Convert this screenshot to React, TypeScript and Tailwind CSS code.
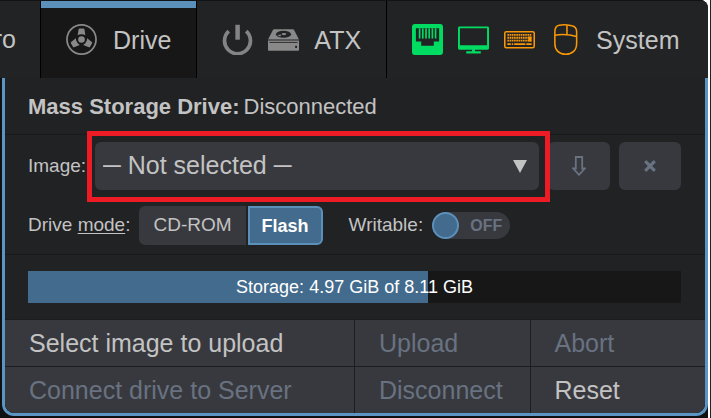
import { useState, type ReactNode } from 'react';
import clsx from 'clsx';

const STORAGE_USED = 4.97;
const STORAGE_TOTAL = 8.11;

function DriveIcon() {
  return (
    <svg viewBox="0 0 32 32" className="size-[31px] shrink-0 text-[#898989]" fill="currentColor" aria-hidden="true">
      <circle cx="16" cy="16" r="15" fill="none" stroke="currentColor" strokeWidth="1.8" />
      <circle cx="16" cy="16" r="3.4" />
      {[0, 120, 240].map(a => (
        <path key={a} transform={`rotate(${a} 16 16)`} d="M14 4.6h4c.6 0 .9.3 1 .8l1 6.2c-1.200-.7-2.400-1-4-1s-2.800.3-4 1l1-6.200c.1-.5.4-.8 1-.8z" />
      ))}
    </svg>
  );
}

function PowerIcon() {
  return (
    <svg viewBox="0 0 32 32" className="size-[31px] shrink-0 text-[#848484]" fill="currentColor" aria-hidden="true">
      <path d="M7 7.4A13.400 13.400 0 1 0 25 7.400" fill="none" stroke="currentColor" strokeWidth="3.8" />
      <rect x="13.8" y="0.8" width="4.6" height="15.4" />
    </svg>
  );
}

function DiskIcon() {
  return (
    <svg viewBox="0 0 32 32" className="size-[31px] shrink-0 text-[#898989]" fill="currentColor" aria-hidden="true">
      <path d="M6.4 5.500h19.200c.6 0 1 .3 1.300.8L32 16H0l5.100-9.700c.3-.5.7-.8 1.300-.8z" />
      <path d="M0 17h32v9.500c0 .7-.5 1.200-1.200 1.200H1.200C.5 27.700 0 27.200 0 26.500z" />
      <rect x="1.5" y="18.5" width="29" height=".9" fill="#222325" />
      <ellipse cx="16" cy="10.6" rx="7.8" ry="3.7" fill="#222325" />
      <ellipse cx="16.5" cy="10.4" rx="2.4" ry="1.1" />
      <path d="M9.500 11.400l4.500-.5-1.500 1.900z" />
      <rect x="28" y="22.5" width="2" height="2.2" fill="#222325" />
    </svg>
  );
}

function NetworkIcon() {
  return (
    <svg viewBox="0 0 32 32" className="size-[31px] shrink-0 text-[#00dc62]" fill="currentColor" aria-hidden="true">
      <path fillRule="evenodd" d="M3 0h26a3 3 0 0 1 3 3v26a3 3 0 0 1-3 3H3a3 3 0 0 1-3-3V3a3 3 0 0 1 3-3zM4 4.500V18h5.500v4.500h13V18H28V4.500z" />
      {[7, 10.3, 13.6, 16.9, 20.2, 23.5].map(x => (
        <rect key={x} x={x} y="4.5" width="1.7" height="10.5" />
      ))}
    </svg>
  );
}

function MonitorIcon() {
  return (
    <svg viewBox="0 0 32 32" className="size-[31px] shrink-0 text-[#00dc62]" fill="currentColor" aria-hidden="true">
      <path fillRule="evenodd" d="M1.500 2.500h29c.8 0 1.500.6 1.500 1.500v21c0 .8-.7 1.500-1.500 1.500h-29C.7 26.500 0 25.800 0 25V4c0-.9.7-1.500 1.500-1.500zM2 4.500V22h28V4.500z" />
      <path d="M14.500 26h3v2h6v2.500h-15V28h6z" />
    </svg>
  );
}

function KeyboardIcon() {
  return (
    <svg viewBox="0 0 32 32" className="size-[31px] shrink-0 text-[#f89707]" fill="currentColor" aria-hidden="true">
      <rect x=".8" y="8" width="30.4" height="16.5" rx="1.5" fill="none" stroke="currentColor" strokeWidth="1.6" />
      <path d="M3.500 11.200h25M3.500 14.200h25M3.500 17.200h25" fill="none" stroke="currentColor" strokeWidth="1.9" strokeDasharray="1.7 .6" />
      <path d="M3.500 20.800h3.500M8 20.800h1.500M10.500 20.800h11.500M23 20.800h5.500" fill="none" stroke="currentColor" strokeWidth="2" />
      <path d="M25 13h3.500v5H25z" />
    </svg>
  );
}

function MouseIcon() {
  return (
    <svg viewBox="0 0 32 32" className="size-[31px] shrink-0 text-[#f89707]" fill="none" stroke="currentColor" strokeWidth="1.6" aria-hidden="true">
      <path d="M9.500 1.200c4-.7 9-.3 13 .6 3.500.7 5 2.700 5 6.200v12c0 7-4.500 11.200-11.300 11.200C9.300 31.200 5 27 5 20V8c0-4 1-6.200 4.500-6.800z" />
      <path d="M5 11.500c8-1.300 15-.8 22.500 1.300M17.500 1.200v9.800" />
    </svg>
  );
}

function NavItem({ active, className, children }: { active?: boolean; className?: string; children: ReactNode }) {
  return (
    <button
      type="button"
      className={clsx(
        'flex shrink-0 items-center px-6 text-[25px] leading-8',
        active && 'border-x border-x-black bg-[#171717] shadow-[inset_0_7px_0_#5b90bb]',
        className
      )}
    >
      {children}
    </button>
  );
}

function ActionCell({ disabled, children }: { disabled?: boolean; children: ReactNode }) {
  return (
    <button
      type="button"
      disabled={disabled}
      className="h-[46px] truncate bg-[#38393e] pt-0.5 pl-6 text-left text-[25px] text-[#c3c3c3] disabled:text-[#687281]"
    >
      {children}
    </button>
  );
}

export default function App() {
  const [mode, setMode] = useState<'cdrom' | 'flash'>('flash');
  const [writable, setWritable] = useState(false);

  const modes = [
    { id: 'cdrom', label: 'CD-ROM' },
    { id: 'flash', label: 'Flash' },
  ] as const;

  return (
    <div className="border-r border-[#222325] bg-white pr-0.5 font-['Liberation_Sans',Arial,sans-serif] text-[#c3c3c3]">
      <div className="overflow-hidden rounded-tr-lg bg-[#101113] pb-0.5">
        <nav className="flex h-[78px] border-t border-[#121315] bg-[#222325]">
          <button type="button" className="flex w-10 shrink-0 items-center justify-end overflow-hidden pr-6 text-[25px]">ro</button>
          <NavItem active className="gap-4 px-[25px]"><DriveIcon /> Drive</NavItem>
          <NavItem className="gap-[15px] border-r border-black px-[25px]"><PowerIcon /><DiskIcon /> ATX</NavItem>
          <NavItem className="gap-[15px] px-[25px]"><NetworkIcon /><MonitorIcon /><KeyboardIcon /><MouseIcon /> System</NavItem>
        </nav>

        <main className="ml-0.5 overflow-hidden rounded-b-xl border-x-[3px] border-b-[3px] border-[#5b95c4] bg-[#212224]">
          <h1 className="flex h-[57px] items-center gap-1 border-b border-[#18191b] px-[23px] text-[22px]">
            <strong>Mass Storage Drive:</strong> Disconnected
          </h1>

          <section className="border-b border-[#18191b] pt-[7px] pr-6 pb-[9px] pl-[23px]">
            <div className="flex items-center gap-[9px]">
              <label htmlFor="image" className="text-[19px]">Image:</label>
              <div className="relative flex-1">
                <select id="image" className="block h-12 w-full appearance-none rounded-md bg-[#38393e] pl-2 text-[25px] text-[#c3c3c3]">
                  <option>─ Not selected ─</option>
                </select>
                <svg viewBox="0 0 14 13" className="pointer-events-none absolute top-[18px] right-3 h-[13px] w-3.5 fill-[#c3c3c3]" aria-hidden="true">
                  <path d="M0 0h14L7 13z" />
                </svg>
                <div className="pointer-events-none absolute -top-[11px] -right-[11px] -bottom-3 -left-2 z-10 border-[5px] border-[#ed1c24]" />
              </div>
              <button type="button" disabled aria-label="Download" className="flex h-12 w-[62px] items-center justify-center rounded-md bg-[#38393e] text-[#687281]">
                <svg viewBox="0 0 14 20" className="h-5 w-3.5" fill="none" stroke="currentColor" strokeWidth="1.8" aria-hidden="true">
                  <path d="M3.800 1h6.400v11.500h2.600L7 18.800 1.200 12.500h2.600z" />
                </svg>
              </button>
              <button type="button" disabled aria-label="Remove" className="flex h-12 w-[62px] items-center justify-center rounded-md bg-[#38393e] text-[#687281]">
                <svg viewBox="0 0 12 12" className="size-3" fill="none" stroke="currentColor" strokeWidth="3.2" aria-hidden="true">
                  <path d="M1.200 1.200l9.600 9.600M10.800 1.200l-9.600 9.600" />
                </svg>
              </button>
            </div>

            <div className="mt-4 flex items-center text-[19px]">
              <span id="mode-label" className="mr-[9px]">Drive <u className="underline-offset-2">mode</u>:</span>
              <div role="radiogroup" aria-labelledby="mode-label" className="flex items-center gap-0.5">
                {modes.map(m => (
                  <label
                    key={m.id}
                    className={clsx(
                      'relative flex h-[39px] items-center border-2 px-3 first:rounded-l-md last:rounded-r-md',
                      mode === m.id ? 'border-[#5b90bb] bg-[#436b8d] text-lg font-bold text-white' : 'border-[#38393e] bg-[#38393e]'
                    )}
                  >
                    <input
                      type="radio"
                      name="mode"
                      className="absolute inset-0 appearance-none"
                      checked={mode === m.id}
                      onChange={() => setMode(m.id)}
                    />
                    {m.label}
                  </label>
                ))}
              </div>
              <label htmlFor="writable" className="ml-[26px]">Writable:</label>
              <div className="relative ml-[9px]">
                <input
                  id="writable"
                  type="checkbox"
                  checked={writable}
                  onChange={e => setWritable(e.target.checked)}
                  className="flex h-[27px] w-[78px] appearance-none rounded-full bg-[#38393e] before:size-[27px] before:rounded-full before:border-2 before:border-[#5b90bb] before:bg-[#436b8d] checked:justify-end"
                />
                <span className={clsx('pointer-events-none absolute inset-y-0 flex items-center text-base font-bold text-[#687281]', writable ? 'left-2' : 'right-2')}>
                  {writable ? 'ON' : 'OFF'}
                </span>
              </div>
            </div>
          </section>

          <section className="py-4 pr-6 pl-[23px]">
            <div role="progressbar" aria-label="Storage" aria-valuemax={STORAGE_TOTAL} aria-valuenow={STORAGE_USED} className="relative h-8 bg-[#171717]">
              <div className="h-full bg-[#436b8d]" style={{ width: `${(STORAGE_USED / STORAGE_TOTAL) * 100}%` }} />
              <span className="absolute inset-0 flex items-center justify-center text-lg text-white">
                Storage: {STORAGE_USED} GiB of {STORAGE_TOTAL} GiB
              </span>
            </div>
          </section>

          <div className="grid grid-cols-[2fr_1fr_1fr] gap-px border-t border-[#1c1d1f] bg-[#1c1d1f]">
            <ActionCell>Select image to upload</ActionCell>
            <ActionCell disabled>Upload</ActionCell>
            <ActionCell disabled>Abort</ActionCell>
            <ActionCell disabled>Connect drive to Server</ActionCell>
            <ActionCell disabled>Disconnect</ActionCell>
            <ActionCell>Reset</ActionCell>
          </div>
        </main>
      </div>
    </div>
  );
}
